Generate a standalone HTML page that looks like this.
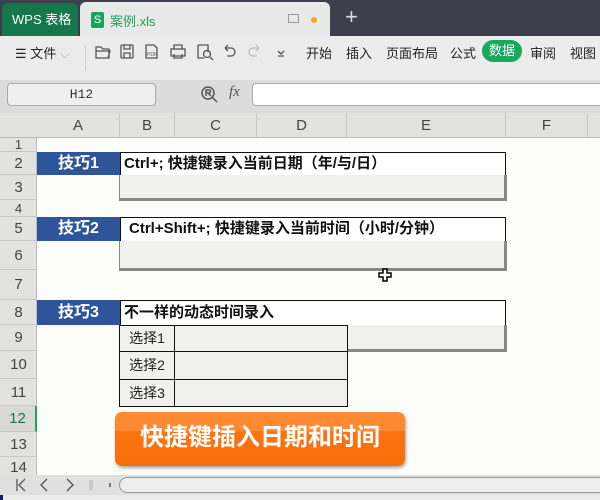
<!DOCTYPE html>
<html><head><meta charset="utf-8"><style>
*{margin:0;padding:0;box-sizing:border-box}
body{width:600px;height:500px;overflow:hidden;background:#fdfdfb;font-family:"Liberation Sans","Noto Sans CJK SC",sans-serif;position:relative}
.a{position:absolute}
.tb{font-size:13px;color:#222;top:43px}
.rh{position:absolute;left:0;width:37px;text-align:center;font-size:15px;color:#444;border-bottom:1px solid #c8c8c8}
.ch{position:absolute;top:113px;height:25px;text-align:center;font-size:15px;color:#444;line-height:25px;border-right:1px solid #c8c8c8}
.blue{position:absolute;left:37px;width:83px;background:#2e559a;color:#fff;font-weight:bold;font-size:16px;text-align:center}
.hd{position:absolute;left:120px;width:386px;border:1.5px solid #111;background:#fff;font-weight:bold;font-size:15px;color:#111;padding-left:3px}
.gr{position:absolute;background:#f0f0ec;border-right:3px solid #888;border-bottom:3px solid #888;border-left:1px solid #888}
.c{position:absolute;border:1px solid #111;background:#f0f0ec;font-size:14px;color:#222}
</style></head><body>
<div class="a" style="left:0;top:0;width:600px;height:36px;background:#3e3f4c"></div>
<div class="a" style="left:2px;top:3px;width:76px;height:33px;background:#17774c;border-radius:6px 6px 0 0;color:#fff;font-size:13px;line-height:33px;padding-left:10px">WPS 表格</div>
<div class="a" style="left:80px;top:2px;width:250px;height:34px;background:#e9e9e9;border-radius:6px 6px 0 0"></div>
<div class="a" style="left:91px;top:12px;width:13px;height:16px;background:#19a45c;border-radius:2px;color:#fff;font-size:11px;text-align:center;line-height:16px">S</div>
<div class="a" style="left:110px;top:11px;font-size:13px;color:#19a45c">案例.xls</div>
<div class="a" style="left:288px;top:14px;width:11px;height:9px;border:1px solid #999"></div>
<div class="a" style="left:311px;top:17px;width:6px;height:6px;border-radius:50%;background:#f5a623"></div>
<div class="a" style="left:345px;top:4px;color:#ddd;font-size:22px">+</div>
<div class="a" style="left:0;top:36px;width:600px;height:44px;background:#ececec"></div>
<div class="a tb" style="left:15px">☰ 文件 <span style="color:#aaa">⌵</span></div>
<div class="a" style="left:85px;top:45px;width:1px;height:26px;background:#ccc"></div>
<svg class="a" style="left:94px;top:42px" width="200" height="20" fill="none" stroke="#555" stroke-width="1.3">
<path d="M2 5h5l2 2h6v9H2z M2 9h14l-2 7"/>
<rect x="27" y="3" width="12" height="13" rx="1"/><path d="M30 3v4h6V3 M30 16v-5h6v5"/>
<path d="M52 3h8l3 3v10H52z"/><text x="53" y="14" font-size="5" fill="#555" stroke="none">PDF</text>
<rect x="77" y="7" width="14" height="7"/><path d="M80 7V3h8v4 M80 12v4h8v-4"/>
<path d="M104 3h10v7 M104 3v13h6"/><circle cx="113" cy="12" r="3.5"/><path d="M116 15l3 3"/>
<path d="M131 6h6a4 4 0 010 8h-4 M131 6l3-3 M131 6l3 3"/>
<path d="M165 6h-6a4 4 0 000 8h4 M165 6l-3-3 M165 6l-3 3" stroke="#bbb"/>
<path d="M184 9l3 3 3-3 M184 14h6"/>
</svg>
<div class="a tb" style="left:306px">开始</div>
<div class="a tb" style="left:346px">插入</div>
<div class="a tb" style="left:386px">页面布局</div>
<div class="a tb" style="left:450px">公式</div>
<div class="a" style="left:482px;top:40px;width:40px;height:22px;background:#1aa75e;border-radius:11px;color:#fff;font-size:13px;text-align:center;line-height:22px">数据</div>
<div class="a tb" style="left:530px">审阅</div>
<div class="a tb" style="left:570px">视图</div>
<div class="a" style="left:0;top:80px;width:600px;height:33px;background:#dcdcdc"></div>
<div class="a" style="left:7px;top:83px;width:149px;height:23px;border:1px solid #aaa;border-radius:4px;background:#efefef;font-family:'Liberation Mono',monospace;font-size:13px;text-align:center;line-height:21px;color:#333">H12</div>
<svg class="a" style="left:200px;top:85px" width="20" height="20" fill="none" stroke="#555" stroke-width="1.5"><circle cx="8" cy="8" r="6"/><path d="M12 12l5 5 M6 11V5h3a1.5 1.5 0 010 3H6 M8 8l3 3"/></svg>
<div class="a" style="left:229px;top:84px;font-size:15px;font-style:italic;color:#555;font-family:'Liberation Serif',serif">fx</div>
<div class="a" style="left:252px;top:83px;width:360px;height:23px;border:1px solid #aaa;border-radius:4px;background:#fff"></div>
<div class="a" style="left:0;top:113px;width:600px;height:25px;background:#e2e2e0;border-bottom:1px solid #bbb"></div>
<div class="ch" style="left:37px;width:83px">A</div>
<div class="ch" style="left:120px;width:55px">B</div>
<div class="ch" style="left:175px;width:82px">C</div>
<div class="ch" style="left:257px;width:90px">D</div>
<div class="ch" style="left:347px;width:159px">E</div>
<div class="ch" style="left:506px;width:82px">F</div>
<div class="a" style="left:0;top:138px;width:37px;height:337px;background:#e2e2e0;border-right:1px solid #bbb"></div>
<div class="rh" style="top:138px;height:14px;line-height:14px;font-size:13px">1</div>
<div class="rh" style="top:152px;height:23px;line-height:23px">2</div>
<div class="rh" style="top:175px;height:25px;line-height:25px">3</div>
<div class="rh" style="top:200px;height:17px;line-height:17px;font-size:13px">4</div>
<div class="rh" style="top:217px;height:24px;line-height:24px">5</div>
<div class="rh" style="top:241px;height:29px;line-height:29px">6</div>
<div class="rh" style="top:270px;height:30px;line-height:30px">7</div>
<div class="rh" style="top:300px;height:25px;line-height:25px">8</div>
<div class="rh" style="top:325px;height:26px;line-height:26px">9</div>
<div class="rh" style="top:351px;height:28px;line-height:28px">10</div>
<div class="rh" style="top:379px;height:27px;line-height:27px">11</div>
<div class="rh" style="top:406px;height:26px;line-height:26px;color:#17774c;border-right:2px solid #1aa75e;background:#d8d8d6">12</div>
<div class="rh" style="top:432px;height:25px;line-height:25px">13</div>
<div class="rh" style="top:457px;height:18px;line-height:22px;border:none">14</div>
<div class="blue" style="top:152px;height:23px;line-height:23px">技巧1</div>
<div class="hd" style="top:152px;height:24px;line-height:21px">Ctrl+; 快捷键录入当前日期（年/与/日）</div>
<div class="gr" style="left:119px;top:175px;width:388px;height:26px"></div>
<div class="blue" style="top:217px;height:24px;line-height:24px">技巧2</div>
<div class="hd" style="top:217px;height:25px;line-height:22px;padding-left:8px">Ctrl+Shift+; 快捷键录入当前时间（小时/分钟）</div>
<div class="gr" style="left:119px;top:241px;width:388px;height:30px"></div>
<svg class="a" style="left:378px;top:268px" width="14" height="14"><path d="M5 1h4v4h4v4H9v4H5V9H1V5h4z" fill="#fff" stroke="#000" stroke-width="1.5"/></svg>
<div class="blue" style="top:300px;height:25px;line-height:25px">技巧3</div>
<div class="hd" style="top:300px;height:26px;line-height:23px">不一样的动态时间录入</div>
<div class="gr" style="left:347px;top:325px;width:160px;height:27px"></div>
<div class="c" style="left:119px;top:325px;width:56px;height:27px;line-height:25px;text-align:center">选择1</div>
<div class="c" style="left:174px;top:325px;width:174px;height:27px"></div>
<div class="c" style="left:119px;top:351px;width:56px;height:29px;line-height:27px;text-align:center">选择2</div>
<div class="c" style="left:174px;top:351px;width:174px;height:29px"></div>
<div class="c" style="left:119px;top:379px;width:56px;height:28px;line-height:26px;text-align:center">选择3</div>
<div class="c" style="left:174px;top:379px;width:174px;height:28px"></div>
<div class="a" style="left:115px;top:412px;width:290px;height:54px;border-radius:7px;background:linear-gradient(#ff8a33 0%,#ff8a33 35%,#fb7410 36%,#f86e0a 100%);box-shadow:1px 2px 3px rgba(0,0,0,.35);color:#fff;font-weight:bold;font-size:24px;text-align:center;line-height:52px">快捷键插入日期和时间</div>
<div class="a" style="left:0;top:475px;width:600px;height:20px;background:#e0e0e0"></div>
<svg class="a" style="left:0;top:475px" width="120" height="20" fill="none" stroke="#555" stroke-width="1.3"><path d="M17 4v12 M25 4l-6 6 6 6 M47 4l-6 6 6 6 M67 4l6 6-6 6"/><path d="M90 5v10 M92 5v10" stroke="#bbb"/><path d="M110 8v4" stroke="#777" stroke-width="2"/></svg>
<div class="a" style="left:119px;top:477px;width:490px;height:16px;border:1px solid #999;border-radius:8px;background:#eee"></div>
<div class="a" style="left:0;top:495px;width:600px;height:5px;background:#ececec"></div>
<div class="a" style="left:0;top:495px;width:3px;height:5px;background:#1a1a6a"></div>
</body></html>
